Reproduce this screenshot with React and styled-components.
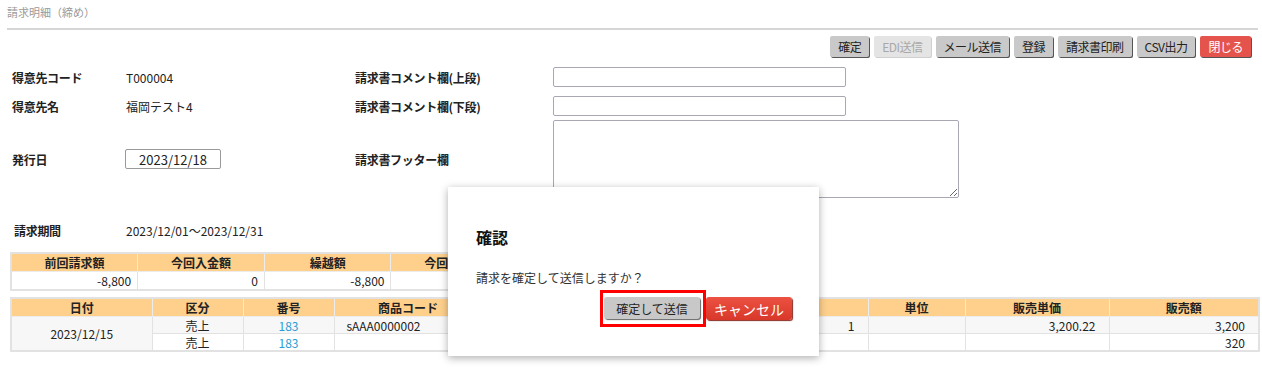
import styled, { createGlobalStyle } from "styled-components";

const GlobalStyle = createGlobalStyle`
  body {
    margin: 0;
    background: #fff;
    color: #222;
    font-family: "Noto Sans CJK JP", "Noto Sans", sans-serif;
    font-size: 12px;
  }
`;

const Page = styled.div`
  position: relative;
  height: 379px;
  padding: 0 4px 0 7px;
  overflow: hidden;
`;

const TitleBar = styled.div`
  height: 28px;
  line-height: 24px;
  border-bottom: 2px solid #d6d6d6;
  color: #9a9a9a;
  font-size: 11px;
`;

const Toolbar = styled.div`
  display: flex;
  justify-content: flex-end;
  gap: 5px;
  margin-top: 6px;
  padding-right: 7px;
`;

const Button = styled.button`
  height: 21px;
  padding: 0 8px;
  border: none;
  border-radius: 2px;
  font-family: inherit;
  font-size: 12px;
  line-height: 21px;
  letter-spacing: -0.5px;
  cursor: pointer;
  background: ${(p) => (p.$variant === "danger" ? "#e5544c" : p.disabled ? "#e4e4e4" : "#c9c9c9")};
  color: ${(p) => (p.$variant === "danger" ? "#fff" : p.disabled ? "#a8a8a8" : "#222")};
  box-shadow: ${(p) => (p.disabled ? "1px 1px 0 #cfcfcf" : "1px 1px 0 #555")};
`;

const FormRow = styled.div`
  display: grid;
  grid-template-columns: 114px 229px 198px 1fr;
  align-items: center;
  height: ${(p) => p.$height}px;
  margin-top: ${(p) => p.$top}px;
  padding-left: 5px;
`;

const Label = styled.div`
  font-weight: bold;
  letter-spacing: -0.3px;
`;

const Value = styled.div``;

const TextInput = styled.input`
  box-sizing: border-box;
  width: ${(p) => p.$width}px;
  height: 20px;
  border: 1px solid #a9a8b2;
  border-radius: 2px;
  padding: 0 4px;
  font-family: inherit;
  font-size: 12px;
`;

const DateInput = styled(TextInput)`
  margin-left: -1px;
  border-color: #9a9a9a;
  text-align: center;
  font-size: 13px;
  color: #222;
`;

const TextArea = styled.textarea`
  box-sizing: border-box;
  width: 406px;
  height: 78px;
  border: 1px solid #a9a8b2;
  border-radius: 2px;
  font-family: inherit;
`;

const PeriodRow = styled.div`
  display: grid;
  grid-template-columns: 112px 1fr;
  align-items: center;
  height: 16px;
  margin-top: 24px;
  padding-left: 7px;
`;

const Table = styled.table`
  border-collapse: collapse;
  table-layout: fixed;
  width: ${(p) => p.$width}px;
  margin: ${(p) => p.$top}px 0 0 3px;
  border: 2px solid #e2e2e2;
  font-size: 12px;
  line-height: 15px;
`;

const Th = styled.th`
  height: 17px;
  padding: 0;
  background: #ffd08c;
  border: 1px solid #ececec;
  font-weight: bold;
  text-align: center;
`;

const Td = styled.td`
  height: ${(p) => p.$height ?? 16}px;
  padding: ${(p) => (p.$align === "left" ? "0 0 0 12px" : p.$align === "right" ? `0 ${p.$pad ?? 13}px 0 0` : "0")};
  border: 1px solid #e2e2e2;
  background: ${(p) => (p.$shade ? "#f7f7f7" : "#fff")};
  text-align: ${(p) => p.$align || "center"};
  white-space: nowrap;
  overflow: hidden;
`;

const LinkText = styled.span`
  color: #2a9dd4;
`;

const Modal = styled.div`
  position: absolute;
  left: 448px;
  top: 187px;
  width: 371px;
  height: 169px;
  box-sizing: border-box;
  padding: 36px 27px 0 28px;
  background: #fff;
  box-shadow: 0 2px 8px rgba(0, 0, 0, 0.32);
`;

const ModalTitle = styled.div`
  font-size: 16px;
  font-weight: bold;
  line-height: 28px;
  color: #111;
`;

const ModalText = styled.div`
  margin-top: 18px;
  line-height: 18px;
  color: #333;
`;

const ModalActions = styled.div`
  display: flex;
  justify-content: flex-end;
  align-items: center;
  margin-top: 3px;
`;

const Highlight = styled.span`
  display: inline-flex;
  padding: 4px 3px 5px 1px;
  border: 3px solid #f00;
`;

const DialogButton = styled.button`
  height: ${(p) => (p.$variant === "danger" ? 23 : 22)}px;
  width: ${(p) => p.$width}px;
  padding: 0;
  border: none;
  border-radius: 3px;
  font-family: inherit;
  font-size: ${(p) => (p.$variant === "danger" ? 14 : 12)}px;
  background: ${(p) => (p.$variant === "danger" ? "linear-gradient(#ec5141, #d8382a)" : "#c8c8c8")};
  color: ${(p) => (p.$variant === "danger" ? "#fff" : "#222")};
  box-shadow: ${(p) => (p.$variant === "danger" ? "1px 1px 1px #8a2a20" : "1px 1px 1px #666")};
`;

const toolbarButtons = [
  { label: "確定" },
  { label: "EDI送信", disabled: true },
  { label: "メール送信" },
  { label: "登録" },
  { label: "請求書印刷" },
  { label: "CSV出力" },
  { label: "閉じる", variant: "danger" },
];

const summaryHeads = ["前回請求額", "今回入金額", "繰越額", "今回売上額", "消費税額", "今回請求額"];
const summaryValues = ["-8,800", "0", "-8,800", "3,520", "320", "-5,280"];

const detailCols = [
  { name: "日付", width: 141 },
  { name: "区分", width: 91 },
  { name: "番号", width: 91 },
  { name: "商品コード", width: 148 },
  { name: "商品名", width: 220 },
  { name: "数量", width: 166 },
  { name: "単位", width: 97 },
  { name: "販売単価", width: 144 },
  { name: "販売額", width: 150 },
];

const App = () => {
  return (
    <>
      <GlobalStyle />
      <Page>
        <TitleBar>請求明細（締め）</TitleBar>

        <Toolbar>
          {toolbarButtons.map((b) => (
            <Button key={b.label} disabled={b.disabled} $variant={b.variant}>
              {b.label}
            </Button>
          ))}
        </Toolbar>

        <FormRow $height={20} $top={10}>
          <Label>得意先コード</Label>
          <Value>T000004</Value>
          <Label>請求書コメント欄(上段)</Label>
          <TextInput $width={293} />
        </FormRow>
        <FormRow $height={20} $top={9}>
          <Label>得意先名</Label>
          <Value>福岡テスト4</Value>
          <Label>請求書コメント欄(下段)</Label>
          <TextInput $width={293} />
        </FormRow>
        <FormRow $height={78} $top={4}>
          <Label>発行日</Label>
          <div>
            <DateInput $width={96} defaultValue="2023/12/18" />
          </div>
          <Label>請求書フッター欄</Label>
          <TextArea />
        </FormRow>

        <PeriodRow>
          <Label>請求期間</Label>
          <Value>2023/12/01～2023/12/31</Value>
        </PeriodRow>

        <Table $width={762} $top={14}>
          <thead>
            <tr>
              {summaryHeads.map((h) => (
                <Th key={h}>{h}</Th>
              ))}
            </tr>
          </thead>
          <tbody>
            <tr>
              {summaryValues.map((v, i) => (
                <Td key={i} $align="right" $pad={6} $height={17}>
                  {v}
                </Td>
              ))}
            </tr>
          </tbody>
        </Table>

        <Table $width={1248} $top={6}>
          <colgroup>
            {detailCols.map((c) => (
              <col key={c.name} style={{ width: c.width }} />
            ))}
          </colgroup>
          <thead>
            <tr>
              {detailCols.map((c) => (
                <Th key={c.name}>{c.name}</Th>
              ))}
            </tr>
          </thead>
          <tbody>
            <tr>
              <Td rowSpan={2} $shade>
                2023/12/15
              </Td>
              <Td $shade>売上</Td>
              <Td $shade>
                <LinkText>183</LinkText>
              </Td>
              <Td $shade $align="left">
                sAAA0000002
              </Td>
              <Td $shade $align="left">
                テスト商品
              </Td>
              <Td $shade $align="right">
                1
              </Td>
              <Td $shade />
              <Td $shade $align="right">
                3,200.22
              </Td>
              <Td $shade $align="right">
                3,200
              </Td>
            </tr>
            <tr>
              <Td>売上</Td>
              <Td>
                <LinkText>183</LinkText>
              </Td>
              <Td />
              <Td $align="left">消費税</Td>
              <Td />
              <Td />
              <Td />
              <Td $align="right">320</Td>
            </tr>
          </tbody>
        </Table>

        <Modal>
          <ModalTitle>確認</ModalTitle>
          <ModalText>請求を確定して送信しますか？</ModalText>
          <ModalActions>
            <Highlight>
              <DialogButton $width={96}>確定して送信</DialogButton>
            </Highlight>
            <DialogButton $variant="danger" $width={86}>
              キャンセル
            </DialogButton>
          </ModalActions>
        </Modal>
      </Page>
    </>
  );
};

export default App;
